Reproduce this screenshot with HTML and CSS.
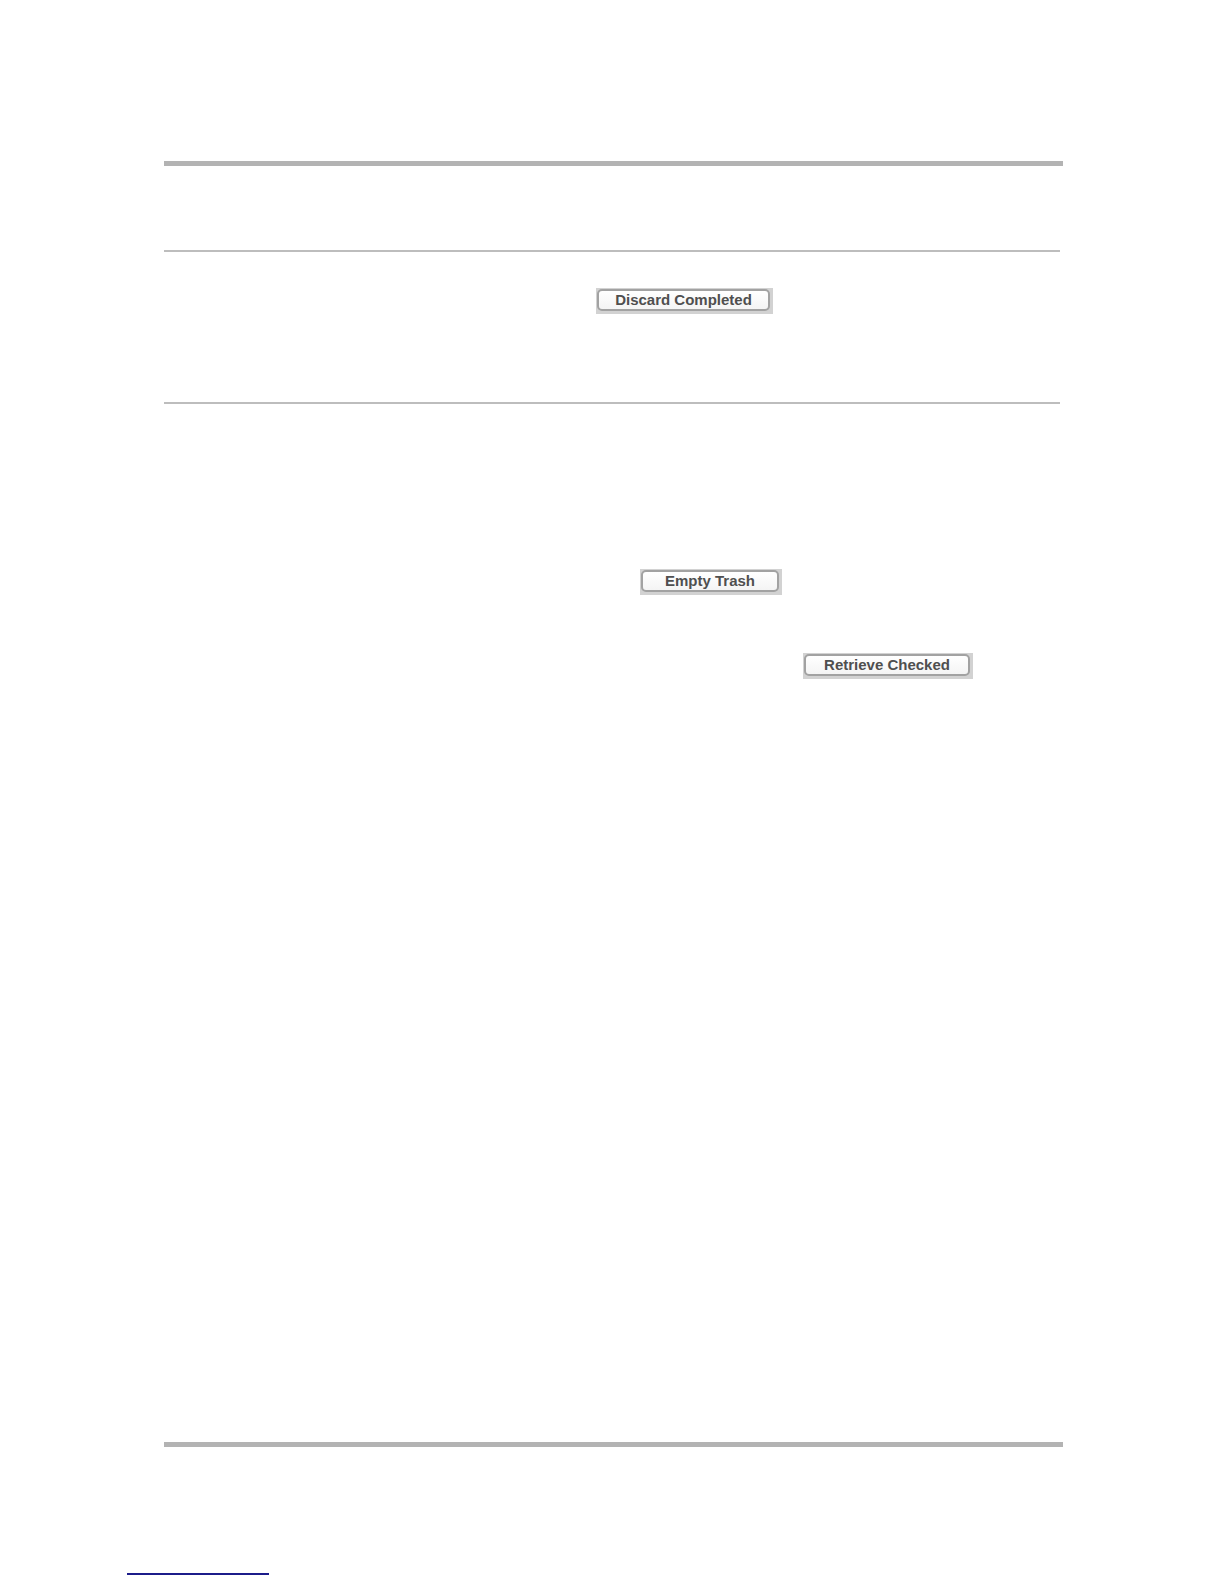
FILE: index.html
```html
<!DOCTYPE html>
<html>
<head>
<meta charset="utf-8">
<title>Page</title>
<link rel="stylesheet" href="styles.css">
</head>
<body>
<div class="page">
  <hr class="rule-thick rule-top">
  <hr class="rule-thin rule-first">
  <div class="row row-discard">
    <span class="btn btn-discard"><span class="btn-face">Discard Completed</span></span>
  </div>
  <hr class="rule-thin rule-second">
  <div class="row row-trash">
    <span class="btn btn-trash"><span class="btn-face">Empty Trash</span></span>
  </div>
  <div class="row row-retrieve">
    <span class="btn btn-retrieve"><span class="btn-face">Retrieve Checked</span></span>
  </div>
  <hr class="rule-thick rule-bottom">
</div>
<div class="footer-link"></div>
</body>
</html>
```

FILE: styles.css
```css
html, body {
  margin: 0;
  padding: 0;
  background: #ffffff;
  font-family: "Liberation Sans", Arial, sans-serif;
}

.page {
  margin-left: 164px;
  width: 899px;
  padding-top: 161px;
}

hr {
  margin: 0;
  border: 0;
  display: block;
}

.rule-thick {
  height: 5px;
  background: #b3b3b3;
  width: 899px;
}

.rule-thin {
  height: 2px;
  background: #bdbdbd;
  width: 896px;
}

.rule-first {
  margin-top: 84px;
}

.row {
  display: flex;
}

.row-discard {
  margin-top: 36px;
  padding-left: 432px;
}

.rule-second {
  margin-top: 88px;
}

.row-trash {
  margin-top: 165px;
  padding-left: 476px;
}

.row-retrieve {
  margin-top: 58px;
  padding-left: 639px;
}

.rule-bottom {
  margin-top: 763px;
}

.btn {
  display: flex;
  box-sizing: border-box;
  height: 26px;
  padding: 1px 3px 3px 1px;
  background: #d2d2d2;
}

.btn-face {
  flex: 1;
  box-sizing: border-box;
  border: 2px solid #a2a2a2;
  border-radius: 5px;
  background: linear-gradient(#ffffff, #f4f4f4);
  color: #4f4f4f;
  font-weight: bold;
  font-size: 15px;
  line-height: 18px;
  text-align: center;
  white-space: nowrap;
  letter-spacing: 0;
}

.btn-discard {
  width: 177px;
}

.btn-trash {
  width: 142px;
}

.btn-retrieve {
  width: 170px;
}

.footer-link {
  margin-left: 127px;
  margin-top: 126px;
  width: 142px;
  height: 2px;
  background: #1c1c8a;
}
```
